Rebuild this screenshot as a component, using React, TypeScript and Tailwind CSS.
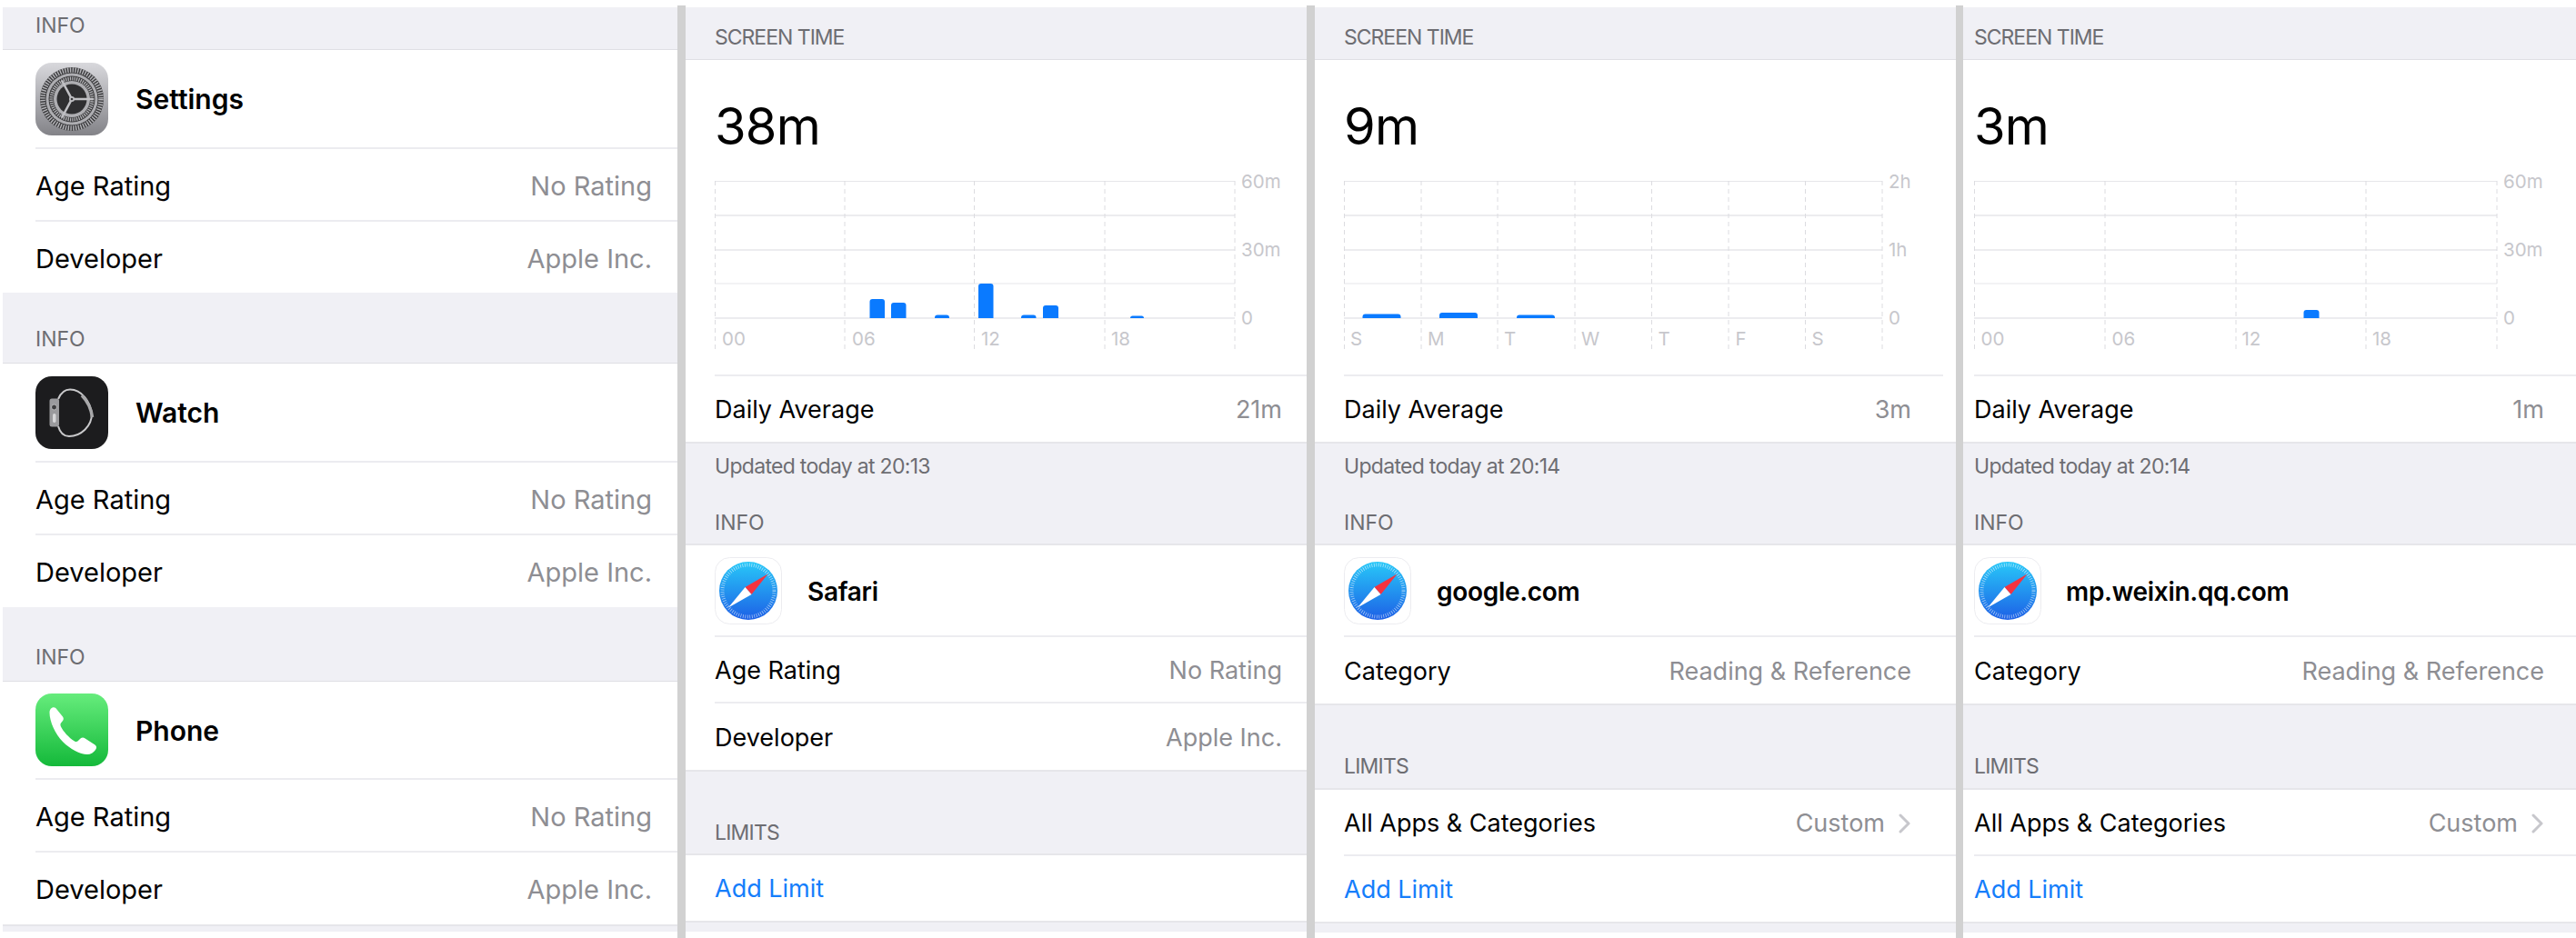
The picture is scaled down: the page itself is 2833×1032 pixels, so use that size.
import React from 'react';

type Pad = { l: string; r: string };
type Bar = { x: number; w: number; h: number };
type ChartData = {
  lines: number[];
  width: number;
  yLabels: string[];
  yLabelX: number;
  xLabels: { x: number; t: string }[];
  bars: Bar[];
};

const caption = 'text-[23px] leading-[24px] text-[#6d6d72]';

const Separator = ({ w }: { w: string }) => <div className={`${w} shrink-0 mt-[6px] bg-[#d1d1d1]`} />;

const SectionHeader = ({ label, h, pb, pad, tracking }: { label: string; h: string; pb: string; pad: Pad; tracking: string }) => (
  <div className={`${h} ${pb} ${pad.l} bg-[#f0f0f5] border-b border-[#dfdfe4] flex items-end`}>
    <span className={`${caption} ${tracking}`}>{label}</span>
  </div>
);

const Row = ({
  label,
  value,
  h,
  pad,
  size,
  last,
  chevron,
  blue,
}: {
  label: string;
  value?: string;
  h: string;
  pad: Pad;
  size: string;
  last?: boolean;
  chevron?: boolean;
  blue?: boolean;
}) => (
  <div className={`bg-white ${pad.l}`}>
    <div className={`${h} ${pad.r} ${size} pt-[3px] flex items-center justify-between ${last ? '' : 'border-b-2 border-[#ececf0]'}`}>
      <span className={blue ? 'text-[#157efb]' : 'text-black'}>{label}</span>
      {value && (
        <span className="flex items-center gap-[15px] text-[#8e8e93]">
          {value}
          {chevron && (
            <svg width="14" height="22" viewBox="0 0 14 22" fill="none">
              <path d="M2 2l9 9-9 9" stroke="#c7c7cc" strokeWidth="3" strokeLinecap="round" strokeLinejoin="round" />
            </svg>
          )}
        </span>
      )}
    </div>
  </div>
);

const SettingsIcon = () => (
  <svg width="80" height="80" viewBox="0 0 80 80" className="shrink-0">
    <defs>
      <linearGradient id="settingsBg" x1="0" y1="0" x2="0" y2="1">
        <stop offset="0" stopColor="#d8d8dc" />
        <stop offset="1" stopColor="#838388" />
      </linearGradient>
    </defs>
    <rect width="80" height="80" rx="18" fill="url(#settingsBg)" />
    <circle cx="40" cy="40" r="35" fill="#3a3a3c" />
    <circle cx="40" cy="40" r="32" fill="none" stroke="#b4b4b8" strokeWidth="5.500" strokeDasharray="1.400 1.400" />
    <circle cx="40" cy="40" r="28.500" fill="#aeaeb2" />
    <circle cx="40" cy="40" r="25.500" fill="#3c3c3e" />
    <circle cx="40" cy="40" r="22.500" fill="none" stroke="#b4b4b8" strokeWidth="4" strokeDasharray="1.200 1.200" />
    <circle cx="40" cy="40" r="20" fill="#aeaeb2" />
    <circle cx="40" cy="40" r="16.500" fill="#2f2f31" />
    <path d="M40 40H63M40 40L29 19.500M40 40L29 60.500" stroke="#c0c0c4" strokeWidth="2.600" />
    <circle cx="40" cy="40" r="3" fill="#c0c0c4" />
    <circle cx="40" cy="40" r="1.300" fill="#3a3a3c" />
  </svg>
);

const WatchIcon = () => (
  <svg width="80" height="80" viewBox="0 0 80 80" className="shrink-0">
    <rect width="80" height="80" rx="18" fill="#1c1c1e" />
    <path
      d="M25 25C28 18 33 14.500 38 14.500C51 14.500 60 28 62 41C62 55 50 66 37 66C31 66 27 62 25 55"
      fill="none"
      stroke="#c9c9cb"
      strokeWidth="2"
    />
    <path d="M51 21C57 27 61 34 62.500 45" fill="none" stroke="#a8a8aa" strokeWidth="3.500" />
    <rect x="15.500" y="24.500" width="10.500" height="31" rx="2.500" fill="#9a9a9d" />
    <circle cx="20.500" cy="34" r="3" fill="#3e3e40" stroke="#b9b9bb" strokeWidth="1" />
    <rect x="19" y="41" width="3.500" height="10" rx="1.700" fill="#d6d6d8" />
  </svg>
);

const PhoneIcon = () => (
  <svg width="80" height="80" viewBox="0 0 80 80" className="shrink-0">
    <defs>
      <linearGradient id="phoneBg" x1="0" y1="0" x2="0" y2="1">
        <stop offset="0" stopColor="#66ec7c" />
        <stop offset="1" stopColor="#14b93a" />
      </linearGradient>
    </defs>
    <rect width="80" height="80" rx="18" fill="url(#phoneBg)" />
    <path
      d="M15.500 21C15.500 17.500 17.500 15.200 20 15.200C21.500 15.200 22.500 16 23.500 17.500L30 25.500C31.200 27 31 29 29.800 30.200L28 32.500C27.200 33.500 27.400 35 28 36.500C30 41 37 49 43 52.500C44.500 53.300 45.700 53.200 46.700 52.200L49.500 49.500C50.800 48.300 52.800 48 54.300 49.200L65.500 56.500C67.500 58 67.500 60 66 62C64 65 60.500 67 57 67C49 67 38 61 30 53C22 45 15.500 31 15.500 21Z"
      fill="#fff"
    />
  </svg>
);

const SafariIcon = ({ id }: { id: string }) => (
  <svg width="74" height="74" viewBox="0 0 74 74" className="shrink-0">
    <defs>
      <linearGradient id={id} x1="0" y1="0" x2="0" y2="1">
        <stop offset="0" stopColor="#28c8f8" />
        <stop offset="1" stopColor="#1d60e6" />
      </linearGradient>
    </defs>
    <rect x="0.500" y="0.500" width="73" height="73" rx="16" fill="#fff" stroke="#ececf0" />
    <circle cx="37" cy="37" r="32" fill={`url(#${id})`} />
    <circle cx="37" cy="37" r="28.500" fill="none" stroke="#ffffff" strokeOpacity="0.6" strokeWidth="4" strokeDasharray="0.8 1.7" />
    <path d="M58.500 18.500L33.500 33L40.500 41Z" fill="#f5333f" />
    <path d="M15 55.500L33.500 33L40.500 41Z" fill="#ffffff" />
  </svg>
);

const AppRow = ({
  icon,
  name,
  h,
  pad,
  gap,
  size,
}: {
  icon: React.ReactNode;
  name: string;
  h: string;
  pad: Pad;
  gap: string;
  size: string;
}) => (
  <div className={`bg-white ${pad.l}`}>
    <div className={`${h} ${gap} flex items-center border-b-2 border-[#ececf0]`}>
      {icon}
      <span className={`${size} pt-[2px] font-semibold text-black`}>{name}</span>
    </div>
  </div>
);

const barPath = ({ x, w, h }: Bar) => {
  const r = Math.min(h, 3);
  const top = 151 - h;
  return `M${x} 151V${top + r}Q${x} ${top} ${x + r} ${top}H${x + w - r}Q${x + w} ${top} ${x + w} ${top + r}V151Z`;
};

const Chart = ({ data }: { data: ChartData }) => (
  <svg width="700" height="186" className="block overflow-visible">
    {[0.5, 38, 76, 113, 151].map((y) => (
      <line key={y} x1="0" x2={data.width} y1={y} y2={y} stroke="#e6e6ea" strokeWidth={y === 38 || y === 76 || y === 151 ? 1.5 : 1} />
    ))}
    {data.lines.map((x) => (
      <line key={x} x1={x} x2={x} y1="0" y2="185" stroke="#dcdce0" strokeDasharray="5 4" />
    ))}
    {data.bars.map((b) => (
      <path key={b.x} d={barPath(b)} fill="#0a7aff" />
    ))}
    {data.yLabels.map((t, i) => (
      <text key={t} x={data.yLabelX} y={[8, 83, 158][i]} fontSize="20.500" fill="#c7c7cc">
        {t}
      </text>
    ))}
    {data.xLabels.map((l, i) => (
      <text key={i} x={l.x} y="181" fontSize="20.500" fill="#c7c7cc">
        {l.t}
      </text>
    ))}
  </svg>
);

const hourLabels = (xs: number[]) => ['00', '06', '12', '18'].map((t, i) => ({ x: xs[i], t }));

const InfoPanel = ({ rows }: { rows: { icon: React.ReactNode; name: string; gapH: string; appH: string; devH: string }[] }) => {
  const pad = { l: 'pl-[36px]', r: 'pr-[28px]' };
  return (
    <div className="w-[742px] shrink-0 pt-[8px] flex flex-col">
      {rows.map((r) => (
        <div key={r.name} className="flex flex-col">
          <SectionHeader label="INFO" h={r.gapH} pb="pb-[14px]" pad={pad} tracking="tracking-[0px]" />
          <AppRow icon={r.icon} name={r.name} h={r.appH} pad={pad} gap="gap-[30px]" size="text-[30px]" />
          <Row label="Age Rating" value="No Rating" h="h-[80px]" pad={pad} size="text-[29px]" />
          <Row label="Developer" value="Apple Inc." h={r.devH} pad={pad} size="text-[29px]" last />
        </div>
      ))}
      <div className="h-[8px] bg-[#f0f0f5] border-t-2 border-[#e6e6ea]" />
    </div>
  );
};

const ScreenTimePanel = ({
  width,
  pad,
  total,
  average,
  updated,
  chart,
  dailyRule,
  name,
  gap,
  iconId,
  children,
}: {
  width: string;
  pad: Pad;
  total: string;
  average: string;
  updated: string;
  chart: ChartData;
  dailyRule: string;
  name: string;
  gap: string;
  iconId: string;
  children: React.ReactNode;
}) => (
  <div className={`${width} shrink-0 pt-[8px] flex flex-col`}>
    <SectionHeader label="SCREEN TIME" h="h-[58px]" pb="pb-[12px]" pad={pad} tracking="tracking-[-1px]" />
    <div className={`h-[420px] bg-white ${pad.l} flex flex-col`}>
      <div className="h-[133px] pt-[45px] text-[56px] leading-[56px] tracking-[-0.8px] text-black">{total}</div>
      <Chart data={chart} />
      <div className={`mt-[27px] h-[2px] bg-[#ececf0] ${dailyRule}`} />
      <div className={`flex-1 pt-[2px] ${pad.r} flex items-center justify-between text-[27px]`}>
        <span className="text-black">Daily Average</span>
        <span className="text-[#8e8e93]">{average}</span>
      </div>
    </div>
    <div className={`h-[114px] ${pad.l} pt-[13px] pb-[11px] bg-[#f0f0f5] border-y-2 border-[#e6e6ea] flex flex-col justify-between`}>
      <span className={`${caption} tracking-[-0.7px]`}>{updated}</span>
      <span className={caption}>INFO</span>
    </div>
    <AppRow icon={<SafariIcon id={iconId} />} name={name} h="h-[101px]" pad={pad} gap={gap} size="text-[28px] tracking-[-0.3px]" />
    {children}
    <div className="h-[12px] bg-[#f0f0f5] border-t-2 border-[#e6e6ea]" />
  </div>
);

const chartToday: ChartData = {
  lines: [0.5, 143, 285.5, 429, 572],
  width: 572,
  yLabels: ['60m', '30m', '0'],
  yLabelX: 579,
  xLabels: hourLabels([8, 151, 293, 436]),
  bars: [
    { x: 170.5, w: 16.5, h: 21 },
    { x: 194, w: 16.5, h: 17 },
    { x: 242, w: 16, h: 3.5 },
    { x: 290, w: 16.5, h: 38 },
    { x: 337, w: 16.5, h: 3.5 },
    { x: 361, w: 17, h: 14 },
    { x: 457, w: 15, h: 2.5 },
  ],
};

const chartWeek: ChartData = {
  lines: [0.5, 85, 169, 254, 338.5, 423, 507.5, 592],
  width: 592,
  yLabels: ['2h', '1h', '0'],
  yLabelX: 599,
  xLabels: ['S', 'M', 'T', 'W', 'T', 'F', 'S'].map((t, i) => ({ x: [7, 92, 176, 261, 345.5, 430.5, 514.5][i], t })),
  bars: [
    { x: 20.5, w: 42, h: 4.5 },
    { x: 105, w: 42, h: 6 },
    { x: 190, w: 42, h: 3.5 },
  ],
};

const chartWeixin: ChartData = {
  lines: [0.5, 144, 288, 431, 575],
  width: 575,
  yLabels: ['60m', '30m', '0'],
  yLabelX: 582,
  xLabels: hourLabels([7.5, 151.5, 294.5, 438]),
  bars: [{ x: 362.5, w: 17, h: 9 }],
};

const pad2 = { l: 'pl-[32px]', r: 'pr-[27px]' };
const pad3 = { l: 'pl-[32px]', r: 'pr-[49px]' };
const pad4 = { l: 'pl-[12px]', r: 'pr-[35px]' };
const detail = 'text-[27px]';

const LimitsBlock = ({ pad }: { pad: Pad }) => (
  <>
    <Row label="Category" value="Reading & Reference" h="h-[73px]" pad={pad} size={detail} last />
    <div className={`h-[95px] ${pad.l} pb-[12px] bg-[#f0f0f5] border-y-2 border-[#e6e6ea] flex items-end`}>
      <span className={`${caption} tracking-[-0.8px]`}>LIMITS</span>
    </div>
    <Row label="All Apps & Categories" value="Custom" h="h-[73px]" pad={pad} size={detail} chevron />
    <Row label="Add Limit" h="h-[72px]" pad={pad} size={detail} last blue />
  </>
);

export default function App() {
  return (
    <div className="w-[2833px] h-[1032px] overflow-hidden bg-white flex pl-[3px] [font-family:Inter,sans-serif]">
      <InfoPanel
        rows={[
          { icon: <SettingsIcon />, name: 'Settings', gapH: 'h-[47px]', appH: 'h-[109px]', devH: 'h-[78px]' },
          { icon: <WatchIcon />, name: 'Watch', gapH: 'h-[78px]', appH: 'h-[109px]', devH: 'h-[79px]' },
          { icon: <PhoneIcon />, name: 'Phone', gapH: 'h-[82px]', appH: 'h-[108px]', devH: 'h-[79px]' },
        ]}
      />
      <Separator w="w-[9px]" />
      <ScreenTimePanel
        width="w-[683px]"
        pad={pad2}
        total="38m"
        average="21m"
        updated="Updated today at 20:13"
        chart={chartToday}
        dailyRule=""
        name="Safari"
        gap="gap-[28px]"
        iconId="safariA"
      >
        <Row label="Age Rating" value="No Rating" h="h-[73px]" pad={pad2} size={detail} />
        <Row label="Developer" value="Apple Inc." h="h-[73px]" pad={pad2} size={detail} last />
        <div className={`h-[94px] ${pad2.l} pb-[11px] bg-[#f0f0f5] border-y-2 border-[#e6e6ea] flex items-end`}>
          <span className={`${caption} tracking-[-0.8px]`}>LIMITS</span>
        </div>
        <Row label="Add Limit" h="h-[72px]" pad={pad2} size={detail} last blue />
      </ScreenTimePanel>
      <Separator w="w-[9px]" />
      <ScreenTimePanel
        width="w-[705px]"
        pad={pad3}
        total="9m"
        average="3m"
        updated="Updated today at 20:14"
        chart={chartWeek}
        dailyRule="mr-[14px]"
        name="google.com"
        gap="gap-[28px]"
        iconId="safariB"
      >
        <LimitsBlock pad={pad3} />
      </ScreenTimePanel>
      <Separator w="w-[8px]" />
      <ScreenTimePanel
        width="w-[674px]"
        pad={pad4}
        total="3m"
        average="1m"
        updated="Updated today at 20:14"
        chart={chartWeixin}
        dailyRule=""
        name="mp.weixin.qq.com"
        gap="gap-[27px]"
        iconId="safariC"
      >
        <LimitsBlock pad={pad4} />
      </ScreenTimePanel>
    </div>
  );
}
